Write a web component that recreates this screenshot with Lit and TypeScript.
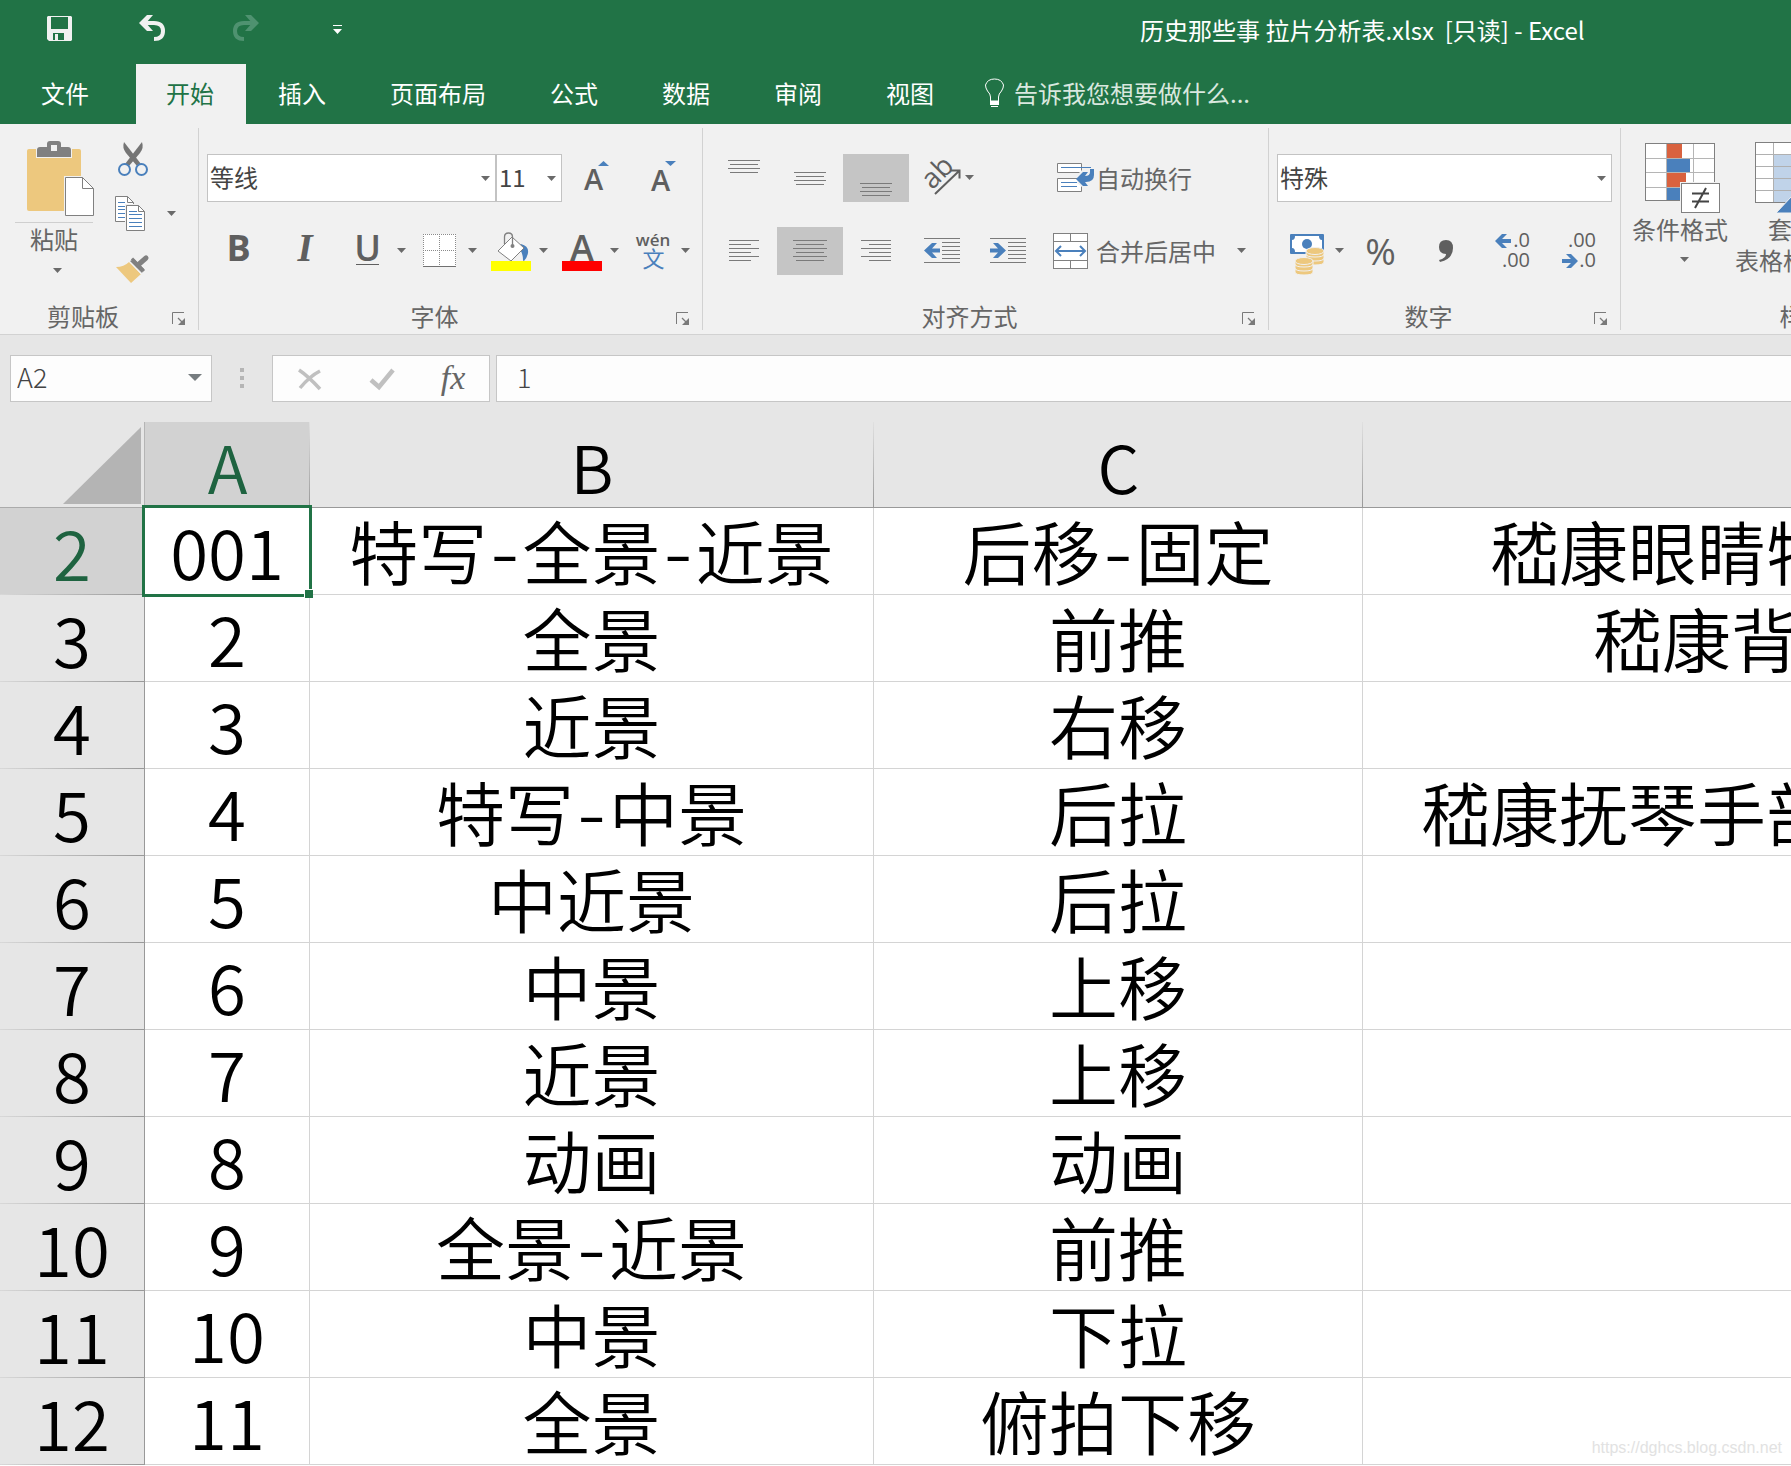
import { LitElement, html, svg, css, nothing } from "lit";
import { customElement, property } from "lit/decorators.js";
import { classMap } from "lit/directives/class-map.js";

/** Wraps drawing instructions in an svg whose viewBox starts at (x, y) of the ribbon canvas. */
const art = (x: number, y: number, w: number, h: number, body: unknown) => html`
  <svg width=${w} height=${h} viewBox="${x} ${y} ${w} ${h}" aria-hidden="true">${body}</svg>
`;

const GREY = "#7a7a7a";
const DARK = "#5f5f5f";
const BLUE = "#4a80bc";
const TAN = "#edc87e";

const caret = (x: number, y: number) => svg`<path d="M${x} ${y}h9l-4.500 5z" fill="#6a6a6a"/>`;

/** Horizontal text lines; each entry is [x, y, width]. */
const rules = (list: number[][], color = GREY) =>
  list.map(([x, y, w]) => svg`<rect x=${x} y=${y} width=${w} height="1" fill=${color} />`);

const paragraph = (y: number, spans: number[][]) =>
  rules(spans.map(([x, w], i) => [x, y + i * 4, w]));

const launcherIcon = html`<svg width="14" height="14" viewBox="0 0 14 14" aria-hidden="true">
  <path d="M.5 12V.5H12" fill="none" stroke="#7a7a7a" />
  <path d="M6 6l5 5" stroke="#7a7a7a" stroke-width="1.3" />
  <path d="M13 6v7H6z" fill="#7a7a7a" />
</svg>`;

const pasteIcon = art(8, 141, 92, 82, svg`
  <rect x="27" y="149" width="54" height="62" rx="2" fill="${TAN}"/>
  <path d="M36 158v-9q0-3 3-3h8v-2q0-3 3-3h8q3 0 3 3v2h8q3 0 3 3v9z" fill="#f1f1f1"/>
  <path d="M37 157v-7q0-3 3-3h7v-3q0-3 3-3h8q3 0 3 3v3h7q3 0 3 3v7z" fill="#808080"/>
  <rect x="51" y="145" width="6" height="6" fill="#f1f1f1"/>
  <path d="M64 176h20l11 11v30h-31z" fill="#f1f1f1"/>
  <path d="M65.500 177.500h17l11 11v27h-28z" fill="#fff" stroke="#808080"/>
  <path d="M82.500 177.500v11h11" fill="none" stroke="#808080"/>
  <rect x="15" y="222" width="78" height="1" fill="#cfcfcf"/>`);

const cutIcon = art(100, 136, 90, 46, svg`
  <path d="M124 142q-2 6 2 11l11 13 4-2z" fill="#757575"/>
  <path d="M142 142q2 6-2 11l-11 13-4-2z" fill="#757575"/>
  <circle cx="124.500" cy="169.500" r="5.500" fill="none" stroke="${BLUE}" stroke-width="2"/>
  <circle cx="141.500" cy="169.500" r="5.500" fill="none" stroke="${BLUE}" stroke-width="2"/>`);

const copyIcon = art(100, 182, 90, 56, svg`
  <path d="M115.500 196.500h12l6 6v19h-18z" fill="#fff" stroke="#808080"/>
  <path d="M127.500 196.500v6h6" fill="none" stroke="#808080"/>
  ${rules([[118, 202, 7], [118, 206, 12], [118, 209, 12], [118, 213, 12], [118, 217, 12]], BLUE)}
  <path d="M125 204h14l7 7v21h-21z" fill="#f1f1f1"/>
  <path d="M126.500 205.500h12l6 6v19h-18z" fill="#fff" stroke="#808080"/>
  <path d="M138.500 205.500v6h6" fill="none" stroke="#808080"/>
  ${rules([[129, 211, 8], [129, 214, 13], [129, 218, 13], [129, 222, 13], [129, 226, 13]], BLUE)}
  ${caret(167, 211)}`);

const brushIcon = art(100, 238, 90, 52, svg`
  <path d="M116 267q8 0 13-5l12 12-10 9z" fill="${TAN}"/>
  <path d="M130 261l4-2 10 10-2 4z" fill="#808080"/>
  <path d="M138 265l8-7" stroke="#808080" stroke-width="5" stroke-linecap="round"/>
  <path d="M132 258.500l12 12.500" stroke="#808080" stroke-width="3"/>
  <path d="M129 261l12 13" stroke="#f1f1f1" stroke-width="1"/>`);

const growIcon = art(562, 154, 66, 48, svg`
  <text class="sans semi" x="593.500" y="190" font-size="29" text-anchor="middle" fill="${DARK}">A</text>
  <path d="M598 166h11l-5.500-5z" fill="${BLUE}"/>`);
const shrinkIcon = art(628, 154, 66, 48, svg`
  <text class="sans semi" x="660.500" y="191" font-size="29" text-anchor="middle" fill="${DARK}">A</text>
  <path d="M665 161h11l-5.500 5z" fill="${BLUE}"/>`);
const boldIcon = art(207, 227, 65, 48, svg`
  <text class="sans bold" x="238.500" y="261" font-size="36" text-anchor="middle" fill="${DARK}">B</text>`);
const italicIcon = art(272, 227, 67, 48, svg`
  <text class="serif bold italic" x="305" y="261" font-size="39" text-anchor="middle" fill="${DARK}">I</text>`);
const underlineIcon = art(339, 227, 71, 48, svg`
  <text class="sans semi" x="367.500" y="261" font-size="36" text-anchor="middle" fill="${DARK}">U</text>
  <rect x="356" y="264" width="23" height="1" fill="${DARK}"/>${caret(397, 248)}`);
const borderIcon = art(410, 227, 71, 48, svg`
  <rect x="423" y="234" width="33" height="32" fill="#fff"/>
  <path d="M423 234.500h33M423 250.500h33M423.500 234v32M439.500 234v32M455.500 234v32" fill="none" stroke="#8a8a8a" stroke-dasharray="1 1"/>
  <rect x="423" y="266" width="33" height="1" fill="#707070"/>${caret(468, 248)}`);
const fillIcon = art(481, 227, 71, 48, svg`
  <path d="M521 244q8 2 7 9-1 5-4 8-1 0-1-1 0-9-6-13z" fill="${BLUE}"/>
  <path d="M498 251l14-14 12 11-13 13z" fill="#fff" stroke="#808080"/>
  <path d="M504.500 244v-7q0-4 4-4t4 4v8" fill="none" stroke="#808080" stroke-width="1.300"/>
  <circle cx="512.500" cy="246" r="2" fill="#808080"/>
  <rect x="491" y="261" width="40" height="10" fill="#ffff00"/>${caret(539, 248)}`);
const fontColorIcon = art(552, 227, 71, 48, svg`
  <text class="sans semi" x="582" y="261" font-size="36" text-anchor="middle" fill="${DARK}">A</text>
  <rect x="562" y="261" width="40" height="10" fill="#ff0000"/>${caret(610, 248)}`);
const phoneticIcon = art(623, 227, 71, 48, svg`
  <text class="sans semi" x="653" y="246" font-size="17" text-anchor="middle" fill="${DARK}">wén</text>
  <text class="han" x="653.500" y="267" font-size="22" text-anchor="middle" fill="${BLUE}">文</text>
  ${caret(681, 248)}`);

const topIcon = art(711, 154, 66, 48, paragraph(160, [[728, 32], [730, 28], [728, 32], [730, 28]]));
const middleIcon = art(777, 154, 66, 48, paragraph(172, [[794, 32], [796, 28], [794, 32], [796, 28]]));
const bottomIcon = art(843, 154, 66, 48, paragraph(183, [[860, 32], [862, 28], [860, 32], [862, 28]]));
const leftIcon = art(711, 227, 66, 48, paragraph(240, [[729, 30], [729, 22], [729, 30], [729, 22], [729, 30], [729, 22]]));
const centerIcon = art(777, 227, 66, 48, paragraph(240, [[793, 34], [796, 28], [793, 34], [796, 28], [793, 34], [796, 28]]));
const rightIcon = art(843, 227, 66, 48, paragraph(240, [[861, 30], [869, 22], [861, 30], [869, 22], [861, 30], [869, 22]]));
const orientIcon = art(909, 154, 72, 48, svg`
  <g transform="rotate(-45 933 187)"><text class="sans" x="930" y="189" font-size="28" fill="${DARK}">ab</text></g>
  <path d="M935 194l24-23M951 170.500h8.500v8" fill="none" stroke="${DARK}" stroke-width="2"/>
  ${caret(965, 175)}`);
const indentLines = (x: number) =>
  rules([[x, 238, 36], [x + 18, 242, 18], [x + 18, 246, 18], [x + 18, 250, 18], [x + 18, 254, 18], [x + 18, 258, 18], [x, 262, 36]]);
const outdentIcon = art(909, 227, 67, 48, svg`${indentLines(924)}
  <path d="M924 250.500l8-7.500h5l-5 5.500h8v4h-8l5 5.500h-5z" fill="${BLUE}"/>`);
const indentIcon = art(976, 227, 66, 48, svg`${indentLines(990)}
  <path d="M1006 250.500l-8-7.500h-5l5 5.500h-8v4h8l-5 5.500h5z" fill="${BLUE}"/>`);
const wrapIcon = art(1042, 154, 54, 48, svg`
  <path d="M1057.500 163.500h24v9h-24zM1057.500 178.500h24v13h-24z" fill="#fff" stroke="#808080"/>
  <path d="M1079 173l3-3h6v17h-6l-5-4z" fill="#f1f1f1"/>
  <path d="M1061 167.500h30M1061 182.500h16M1061 186.500h16" stroke="${BLUE}"/>
  <path d="M1090 169h4v6q0 7-8 7h-1l3 4h-5l-7-7 7-7h5l-3 4q5 0 5-4z" fill="${BLUE}"/>`);
const mergeIcon = art(1042, 227, 54, 48, svg`
  <rect x="1053.500" y="233.500" width="34" height="35" fill="#fff" stroke="#808080"/>
  <path d="M1053 241.500h35M1053 260.500h35M1070.500 234v7M1070.500 261v7" stroke="#808080"/>
  <path d="M1057 251h27M1061 246l-5 5 5 5M1080 246l5 5-5 5" fill="none" stroke="${BLUE}" stroke-width="2"/>`);

const coin = (x: number, y: number) => svg`
  <path d="M${x} ${y}v3q0 3 9 3t9-3v-3z" fill="${TAN}" stroke="#f1f1f1"/>`;
const stack = (x: number, y: number) => svg`${coin(x, y + 8)}${coin(x, y + 4)}${coin(x, y)}
  <ellipse cx=${x + 9} cy=${y} rx="9" ry="3.500" fill="${TAN}" stroke="#f1f1f1"/>`;
const moneyIcon = art(1277, 227, 71, 48, svg`
  <rect x="1290" y="234" width="34" height="20" rx="1" fill="${BLUE}"/>
  <path d="M1295 236h24q0 4 3 4v8q-3 0-3 4h-24q0-4-3-4v-8q3 0 3-4z" fill="#fff"/>
  <circle cx="1307" cy="244" r="5" fill="${BLUE}"/>
  ${stack(1306, 251)}${stack(1295, 261)}${caret(1335, 248)}`);
const percentIcon = art(1348, 227, 66, 48, svg`
  <text class="sans" x="1380.500" y="265" font-size="37" text-anchor="middle" fill="${DARK}">%</text>`);
const commaIcon = art(1414, 227, 66, 48, svg`
  <path d="M1446 240q7 0 7 8 0 11-13 14l-1-2q7-2 7-6-7 0-7-7t7-7z" fill="${DARK}"/>`);
const moreDecimalsIcon = art(1480, 227, 66, 48, svg`
  <text class="sans" x="1530" y="247" font-size="20" text-anchor="end" fill="${DARK}">.0</text>
  <text class="sans" x="1530" y="267" font-size="20" text-anchor="end" fill="${DARK}">.00</text>
  <path d="M1495 241l7-7h5l-5 5h9v4h-9l5 5h-5z" fill="${BLUE}"/>`);
const fewerDecimalsIcon = art(1546, 227, 66, 48, svg`
  <text class="sans" x="1596" y="247" font-size="20" text-anchor="end" fill="${DARK}">.00</text>
  <text class="sans" x="1596" y="267" font-size="20" text-anchor="end" fill="${DARK}">.0</text>
  <path d="M1578 261l-7-7h-5l5 5h-9v4h9l-5 5h5z" fill="${BLUE}"/>`);

const conditionalIcon = art(1629, 136, 102, 77, svg`
  <rect x="1645.500" y="143.500" width="69" height="57" fill="#fff" stroke="#808080"/>
  <path d="M1646 158.500h68M1646 172.500h68M1646 187.500h68M1666.500 144v56M1693.500 144v56" stroke="#b5b5b5"/>
  <rect x="1667" y="144" width="15" height="14" fill="#d9623f"/>
  <rect x="1667" y="159" width="23" height="13" fill="${BLUE}"/>
  <rect x="1667" y="173" width="19" height="14" fill="#d9623f"/>
  <rect x="1667" y="188" width="15" height="12" fill="${BLUE}"/>
  <rect x="1680" y="182" width="41" height="31" fill="#f1f1f1"/>
  <rect x="1681.500" y="183.500" width="38" height="29" fill="#fff" stroke="#808080"/>
  <path d="M1692 193.500h17M1692 201.500h17M1706 188l-11 20" stroke="#444" stroke-width="2"/>`);
const tableStyleIcon = art(1731, 136, 122, 77, svg`
  <rect x="1755.500" y="142.500" width="70" height="60" fill="#fff" stroke="#808080"/>
  <rect x="1774" y="155" width="51" height="47" fill="#c0d3e9"/>
  <path d="M1756 154.500h69M1756 166.500h69M1756 178.500h69M1756 190.500h69M1773.500 143v59M1791.500 143v59" stroke="#b0b0b0"/>
  <path d="M1776 213l16-17v17z" fill="${BLUE}" stroke="#f1f1f1"/>`);

interface Row {
  n: number;
  a: string;
  b: string;
  c: string;
  d?: string;
  lead?: number;
}

const ROWS: Row[] = [
  { n: 2, a: "001", b: "特写-全景-近景", c: "后移-固定", d: "嵇康眼睛特", lead: 127 },
  { n: 3, a: "2", b: "全景", c: "前推", d: "嵇康背", lead: 230 },
  { n: 4, a: "3", b: "近景", c: "右移" },
  { n: 5, a: "4", b: "特写-中景", c: "后拉", d: "嵇康抚琴手部", lead: 58 },
  { n: 6, a: "5", b: "中近景", c: "后拉" },
  { n: 7, a: "6", b: "中景", c: "上移" },
  { n: 8, a: "7", b: "近景", c: "上移" },
  { n: 9, a: "8", b: "动画", c: "动画" },
  { n: 10, a: "9", b: "全景-近景", c: "前推" },
  { n: 11, a: "10", b: "中景", c: "下拉" },
  { n: 12, a: "11", b: "全景", c: "俯拍下移" },
];

const base = css`
  * {
    box-sizing: border-box;
  }
  :host {
    display: block;
    box-sizing: border-box;
    font-family: "Noto Sans CJK SC", "Open Sans", sans-serif;
    font-size: 24px;
    line-height: 31px;
  }
  button {
    display: flex;
    align-items: center;
    flex: none;
    margin: 0;
    padding: 0;
    border: 0;
    background: none;
    color: inherit;
    font: inherit;
    white-space: nowrap;
  }
  svg {
    display: block;
    flex: none;
    overflow: visible;
  }
  .sans {
    font-family: "Open Sans", sans-serif;
  }
  .serif {
    font-family: "Liberation Serif", serif;
  }
  .han {
    font-family: "Noto Sans CJK SC", sans-serif;
  }
  .semi {
    font-weight: 600;
  }
  .bold {
    font-weight: 700;
  }
  .italic {
    font-style: italic;
  }
`;

@customElement("title-bar")
class TitleBar extends LitElement {
  static styles = [
    base,
    css`
      :host {
        background: #217346;
        color: #fff;
      }
      .bar {
        display: flex;
        align-items: flex-start;
        height: 64px;
        overflow: hidden;
      }
      .quick {
        display: flex;
        flex: none;
        padding-left: 13px;
        width: 1140px;
      }
      h1 {
        margin: 0;
        padding-top: 14px;
        font: inherit;
        white-space: pre;
      }
      nav {
        display: flex;
        height: 60px;
        overflow: hidden;
      }
      nav button {
        padding: 0 32px 4px;
      }
      nav .file {
        padding: 0 47px 4px 41px;
      }
      nav .active {
        padding: 0 32px 4px 30px;
        background: #f1f1f1;
        color: #217346;
      }
      nav .tell {
        padding: 0 0 4px 16px;
        color: #d9e8df;
      }
    `,
  ];

  render() {
    const tabs = ["文件", "开始", "插入", "页面布局", "公式", "数据", "审阅", "视图"];
    return html`
      <div class="bar">
        <div class="quick">
          <button aria-label="保存">${art(13, 0, 94, 56, svg`
            <path d="M48 16h23l1 1v23l-1 1h-22l-2-2v-22z" fill="#f1f1f1"/>
            <path d="M51 17h17v12h-17zM53 33h11v7h-11z" fill="#217346"/>
            <path d="M55 34h3v6h-3z" fill="#f1f1f1"/>`)}</button>
          <button aria-label="撤消">${art(107, 0, 94, 56, svg`
            <path d="M142 23h12q9 0 9 8 0 8-9 8" fill="none" stroke="#f1f1f1" stroke-width="4"/>
            <path d="M139 23l8-8h6l-7 8 7 8h-6z" fill="#f1f1f1"/>`)}</button>
          <button aria-label="恢复" disabled>${art(201, 0, 94, 56, svg`
            <g fill="none" stroke="#4f9270"><path d="M256 23h-12q-9 0-9 8 0 8 9 8" stroke-width="4"/></g>
            <path d="M259 23l-8-8h-6l7 8-7 8h6z" fill="#4f9270"/>`)}</button>
          <button aria-label="自定义快速访问工具栏">${art(295, 0, 94, 56, svg`
            <path d="M333 25h9v1h-9zM333 29h9l-4.500 5z" fill="#fff"/>`)}</button>
        </div>
        <h1>历史那些事 拉片分析表.xlsx  [只读] - Excel</h1>
      </div>
      <nav>
        ${tabs.map(
          (t, i) => html`<button class=${classMap({ file: i === 0, active: i === 1 })}>${t}</button>`,
        )}
        <button class="tell">
          ${art(982, 64, 32, 56, svg`
            <path d="M990.500 101v-4q0-3-3-6-2-3-2-6 2-6 9-6t9 6q0 3-2 6-3 3-3 6v4z" fill="none" stroke="#fff"/>
            <path d="M990 101h9v4h-9zM991 106h7v1h-7z" fill="#fff"/>`)}
          <span>告诉我您想要做什么...</span>
        </button>
      </nav>
    `;
  }
}

@customElement("ribbon-group")
class RibbonGroup extends LitElement {
  @property() label = "";
  @property({ type: Boolean }) plain = false;

  static styles = [
    base,
    css`
      :host {
        display: flex;
        flex-direction: column;
        flex: none;
        margin: 4px 0;
        border-right: 1px solid #d2d2d2;
        color: #666;
      }
      :host([wide]) {
        min-width: 398px;
      }
      .body {
        display: flex;
        height: 172px;
        padding: 0 8px;
      }
      footer {
        display: flex;
        height: 30px;
      }
      .name {
        flex: 1;
        text-align: center;
      }
      .launch {
        width: 32px;
        padding: 8px 0 0 6px;
      }
    `,
  ];

  render() {
    return html`
      <div class="body"><slot></slot></div>
      <footer>
        <span class="name">${this.label}</span>
        <button class="launch" aria-label="${this.label}设置">${this.plain ? nothing : launcherIcon}</button>
      </footer>
    `;
  }
}

@customElement("ribbon-bar")
class RibbonBar extends LitElement {
  static styles = [
    base,
    css`
      :host {
        display: flex;
        height: 211px;
        overflow: hidden;
        background: #f1f1f1;
        border-bottom: 1px solid #d2d2d2;
        color: #444;
      }
      .rows {
        display: flex;
        flex-direction: column;
        gap: 25px;
        padding-top: 26px;
      }
      .row {
        display: flex;
        height: 48px;
      }
      .row span {
        padding-bottom: 2px;
      }
      .on {
        background: #c5c5c5;
      }
      .big {
        flex-direction: column;
        align-self: flex-start;
      }
      .paste {
        padding-top: 13px;
      }
      .styled {
        padding-top: 8px;
      }
      .col {
        padding-top: 8px;
      }
      .inline {
        display: flex;
        align-items: center;
      }
      .combo {
        display: grid;
        height: 48px;
        align-items: center;
        justify-items: end;
        background: #fff;
        border: 1px solid #c3c3c3;
      }
      .combo > * {
        grid-area: 1 / 1;
      }
      .family {
        width: 289px;
      }
      .size {
        width: 66px;
      }
      .format {
        width: 335px;
      }
      select {
        width: 100%;
        height: 46px;
        padding: 0 24px 3px 2px;
        border: 0;
        background: none;
        appearance: none;
        color: #444;
        font: inherit;
      }
      .combo svg {
        margin-right: 5px;
        pointer-events: none;
      }
    `,
  ];

  private combo(kind: string, label: string, value: string) {
    return html`<label class="combo ${kind}">
      <select aria-label=${label}>
        <option>${value}</option>
      </select>
      <svg width="9" height="5" viewBox="0 0 9 5" aria-hidden="true">${caret(0, 0)}</svg>
    </label>`;
  }

  private tool(label: string, icon: unknown, on = false) {
    return html`<button class=${classMap({ on })} aria-label=${label}>${icon}</button>`;
  }

  render() {
    return html`
      <ribbon-group label="剪贴板">
        <button class="big paste">
          ${pasteIcon}<span>粘贴</span>${art(8, 254, 92, 24, caret(53, 268))}
        </button>
        <div class="col">
          ${this.tool("剪切", cutIcon)}${this.tool("复制", copyIcon)}${this.tool("格式刷", brushIcon)}
        </div>
      </ribbon-group>
      <ribbon-group label="字体">
        <div class="rows">
          <div class="row">
            ${this.combo("family", "字体", "等线")}${this.combo("size", "字号", "11")}
            ${this.tool("增大字号", growIcon)}${this.tool("减小字号", shrinkIcon)}
          </div>
          <div class="row">
            ${this.tool("加粗", boldIcon)}${this.tool("倾斜", italicIcon)}${this.tool("下划线", underlineIcon)}
            ${this.tool("边框", borderIcon)}${this.tool("填充颜色", fillIcon)}${this.tool("字体颜色", fontColorIcon)}
            ${this.tool("拼音", phoneticIcon)}
          </div>
        </div>
      </ribbon-group>
      <ribbon-group label="对齐方式">
        <div class="rows">
          <div class="row">
            ${this.tool("顶端对齐", topIcon)}${this.tool("垂直居中", middleIcon)}
            ${this.tool("底端对齐", bottomIcon, true)}${this.tool("方向", orientIcon)}
          </div>
          <div class="row">
            ${this.tool("左对齐", leftIcon)}${this.tool("居中", centerIcon, true)}${this.tool("右对齐", rightIcon)}
            ${this.tool("减少缩进量", outdentIcon)}${this.tool("增加缩进量", indentIcon)}
          </div>
        </div>
        <div class="rows">
          <div class="row"><button>${wrapIcon}<span>自动换行</span></button></div>
          <div class="row">
            <button>${mergeIcon}<span>合并后居中</span>${art(1216, 227, 44, 48, caret(1237, 248))}</button>
          </div>
        </div>
      </ribbon-group>
      <ribbon-group label="数字">
        <div class="rows">
          <div class="row">${this.combo("format", "数字格式", "特殊")}</div>
          <div class="row">
            ${this.tool("会计数字格式", moneyIcon)}${this.tool("百分比样式", percentIcon)}
            ${this.tool("千位分隔样式", commaIcon)}${this.tool("增加小数位数", moreDecimalsIcon)}
            ${this.tool("减少小数位数", fewerDecimalsIcon)}
          </div>
        </div>
      </ribbon-group>
      <ribbon-group label="样式" plain wide>
        <button class="big styled">
          ${conditionalIcon}<span>条件格式</span>${art(1629, 244, 102, 31, caret(1680, 257))}
        </button>
        <button class="big styled">
          ${tableStyleIcon}<span>套用</span>
          <span class="inline">表格格式${art(0, 0, 18, 31, caret(8, 13))}</span>
        </button>
      </ribbon-group>
    `;
  }
}

@customElement("formula-bar")
class FormulaBar extends LitElement {
  static styles = [
    base,
    css`
      :host {
        display: flex;
        padding: 20px 0;
        background: #e6e6e6;
      }
      .box {
        display: flex;
        flex: none;
        align-items: center;
        height: 47px;
        background: #fdfdfd;
        border: 1px solid #c6c6c6;
      }
      .name {
        width: 202px;
        margin-left: 10px;
      }
      .actions {
        width: 218px;
        margin-right: 6px;
      }
      .value {
        flex: 1 1 0;
        border-right: 0;
      }
      input {
        flex: 1;
        min-width: 0;
        height: 44px;
        border: 0;
        padding: 0 6px 5px;
        background: none;
        color: #444;
        font: 300 27px "Noto Sans CJK SC", sans-serif;
      }
      .value input {
        padding: 0 20px 5px;
      }
    `,
  ];

  render() {
    return html`
      <div class="box name">
        <input aria-label="名称框" value="A2" />
        <button aria-label="展开名称框">${art(181, 356, 30, 44, svg`<path d="M188 373h14l-7 7z" fill="#767c7f"/>`)}</button>
      </div>
      ${art(212, 355, 60, 47, svg`<path d="M240 368h4v4h-4zM240 376h4v4h-4zM240 384h4v4h-4z" fill="#b5b5b5"/>`)}
      <div class="box actions">
        <button aria-label="取消">${art(273, 356, 72, 45, svg`
          <path d="M299 370q9 6 21 19M320 371q-10 5-20 17" fill="none" stroke="#c0c0c0" stroke-width="3.500"/>`)}</button>
        <button aria-label="输入">${art(345, 356, 72, 45, svg`
          <path d="M371 380l8 7 14-17" fill="none" stroke="#c0c0c0" stroke-width="4.500"/>`)}</button>
        <button aria-label="插入函数">${art(417, 356, 72, 45, svg`
          <text class="serif italic" x="453" y="389" font-size="34" text-anchor="middle" fill="#666">fx</text>`)}</button>
      </div>
      <div class="box value"><input aria-label="编辑栏" value="1" /></div>
    `;
  }
}

@customElement("sheet-grid")
class SheetGrid extends LitElement {
  static styles = [
    base,
    css`
      :host {
        overflow: hidden;
        background: #fff;
      }
      table {
        width: 100%;
        table-layout: fixed;
        border-collapse: separate;
        border-spacing: 0;
        color: #000;
        font-size: 69px;
        font-weight: 350;
        line-height: 84px;
      }
      .c0 {
        width: 145px;
      }
      .c1 {
        width: 165px;
      }
      .c2 {
        width: 564px;
      }
      .c3 {
        width: 489px;
      }
      th,
      td {
        height: 87px;
        padding: 0 0 2px;
        font-weight: inherit;
        text-align: center;
        white-space: nowrap;
      }
      td {
        border-right: 1px solid #d4d4d4;
        border-bottom: 1px solid #d4d4d4;
      }
      .lead {
        border-right: 0;
        text-align: left;
      }
      .top {
        height: 86px;
        padding: 0;
        border-bottom: 1px solid #999;
        background: linear-gradient(#e0e0e0, #999) right / 1px 100% no-repeat #e6e6e6;
        font-size: 66px;
      }
      .top:last-child {
        background: #e6e6e6;
      }
      .side {
        border-right: 1px solid #999;
        background: linear-gradient(90deg, #d8d8d8, #999) bottom / 100% 1px no-repeat #e6e6e6;
      }
      .top.picked,
      .side.picked {
        background-color: #d2d2d2;
        color: #1e6340;
      }
      .corner {
        height: 86px;
        padding: 0;
        border-right: 1px solid #b5b5b5;
        border-bottom: 1px solid #ababab;
        background: #e6e6e6;
      }
      .corner button {
        width: 144px;
        height: 85px;
      }
      .selected {
        position: relative;
      }
      .frame {
        position: absolute;
        inset: -3px -3px -3px -3px;
        border: 3px solid #217346;
      }
      .handle {
        position: absolute;
        right: -4px;
        bottom: -4px;
        width: 9px;
        height: 9px;
        background: #217346;
        border: solid #fff;
        border-width: 1px 0 0 1px;
      }
      .dash {
        padding: 0 2px;
        font-family: Inter, sans-serif;
        line-height: 0;
      }
    `,
  ];

  /** Hyphens between shot names are set in a wider face than the ideographs. */
  private shots(text: string) {
    return text.split("-").map((part, i) => (i ? html`<span class="dash">-</span>${part}` : part));
  }

  render() {
    return html`
      <table>
        <colgroup>
          <col class="c0" />
          <col class="c1" />
          <col class="c2" />
          <col class="c3" />
          <col />
        </colgroup>
        <thead>
          <tr>
            <th class="corner">
              <button aria-label="全选">${art(0, 422, 144, 85, svg`<path d="M141 427v77h-78z" fill="#b4b4b4"/>`)}</button>
            </th>
            <th class="top picked" scope="col">A</th>
            <th class="top" scope="col">B</th>
            <th class="top" scope="col">C</th>
            <th class="top" scope="col"></th>
          </tr>
        </thead>
        <tbody>
          ${ROWS.map(
            (r, i) => html`<tr>
              <th class=${classMap({ side: true, picked: i === 0 })} scope="row">${r.n}</th>
              <td class=${classMap({ selected: i === 0 })}>
                ${r.a}${i === 0 ? html`<span class="frame"><span class="handle"></span></span>` : nothing}
              </td>
              <td>${this.shots(r.b)}</td>
              <td>${this.shots(r.c)}</td>
              <td class="lead" style="padding-left:${r.lead ?? 0}px">${r.d ?? nothing}</td>
            </tr>`,
          )}
        </tbody>
      </table>
    `;
  }
}

@customElement("app-root")
class AppRoot extends LitElement {
  static styles = css`
    :host {
      display: block;
      position: relative;
      min-height: 100vh;
      overflow: hidden;
      background: #fff;
    }
    .mark {
      position: absolute;
      right: 9px;
      bottom: 8px;
      color: #e2e2e2;
      font: 16px/20px "Liberation Sans", sans-serif;
    }
  `;

  render() {
    return html`
      <title-bar></title-bar>
      <ribbon-bar></ribbon-bar>
      <formula-bar></formula-bar>
      <sheet-grid></sheet-grid>
      <span class="mark">https://dghcs.blog.csdn.net</span>
    `;
  }
}
